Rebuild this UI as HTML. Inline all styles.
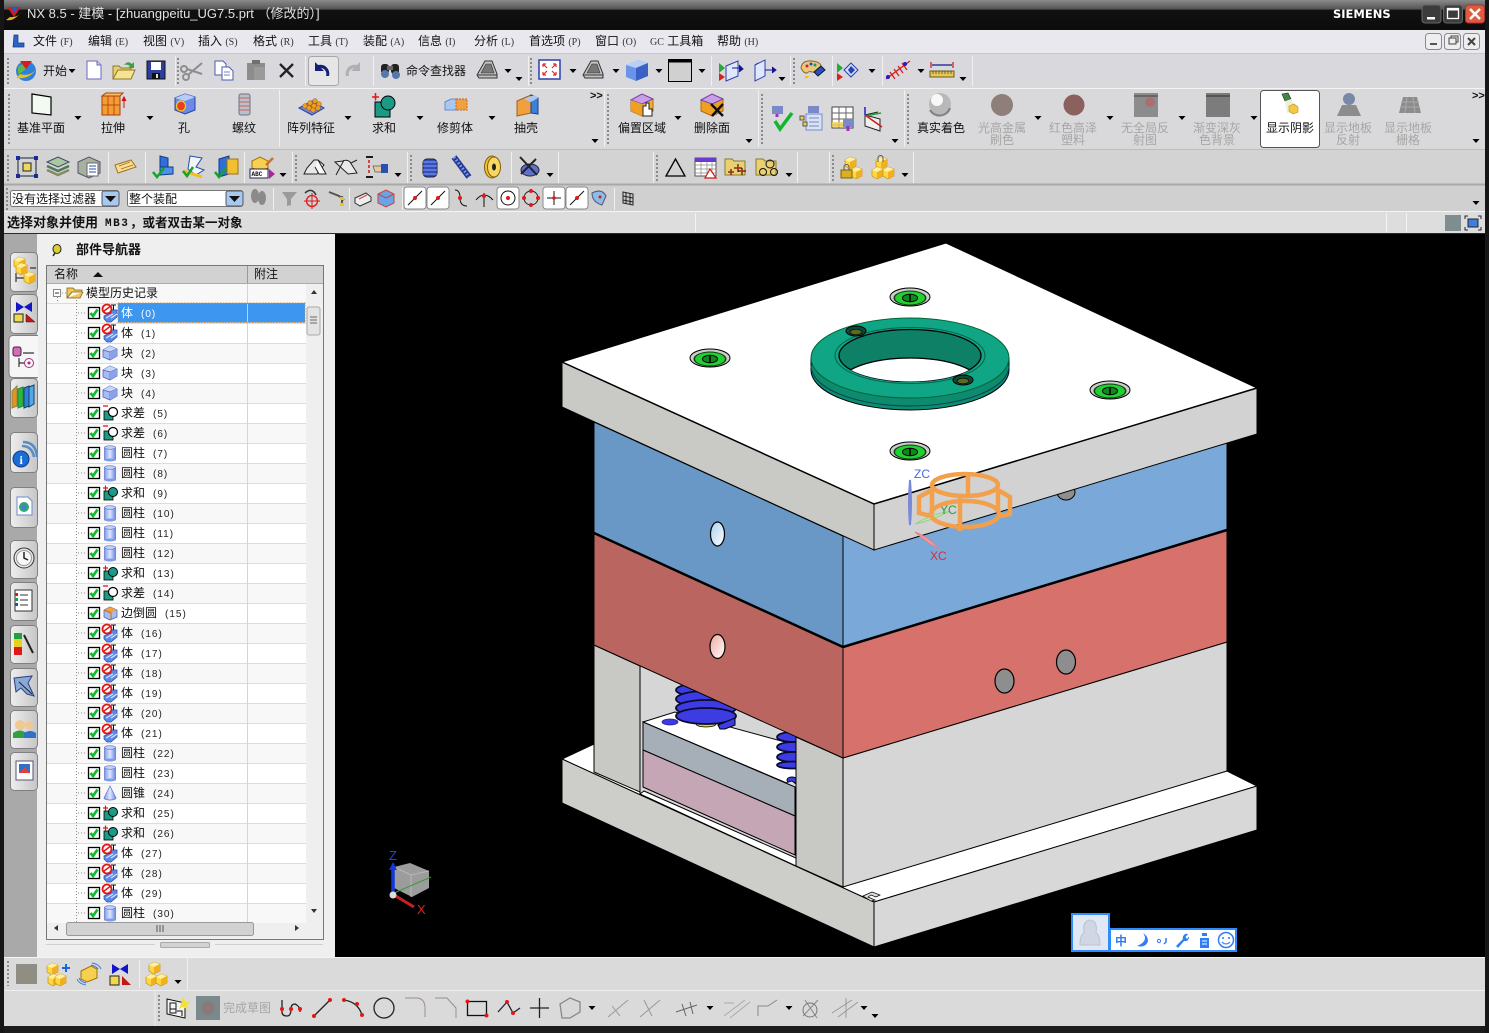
<!DOCTYPE html>
<html><head><meta charset="utf-8"><title>NX 8.5</title>
<style>
html,body{margin:0;padding:0;background:#000;width:1489px;height:1033px;overflow:hidden}
svg{display:block;position:absolute;left:0;top:0}
text{font-family:"Liberation Sans","WenQuanYi Zen Hei","Noto Sans CJK SC",sans-serif;font-size:12px;fill:#111}
.m{text-anchor:middle}
.g{fill:#a6a6a6}
.n{font-size:10px;letter-spacing:1px;fill:#222}
.k{font-size:10px;fill:#333;font-family:"Liberation Serif",serif}
.b{font-weight:bold}
.sep{stroke:#f0f0f0;stroke-width:1}
.grip{stroke:#8a8a8a;stroke-width:2;stroke-dasharray:2 2}
</style></head><body>
<svg width="1489" height="1033" viewBox="0 0 1489 1033" xmlns="http://www.w3.org/2000/svg">
<defs>
<linearGradient id="tb" x1="0" y1="0" x2="0" y2="1"><stop offset="0" stop-color="#8a8a8a"/><stop offset=".3" stop-color="#555"/><stop offset=".34" stop-color="#111"/><stop offset="1" stop-color="#0c0c0c"/></linearGradient>
<linearGradient id="cy" x1="0" y1="0" x2="1" y2="0"><stop offset="0" stop-color="#7f9be8"/><stop offset=".5" stop-color="#dfe7ff"/><stop offset="1" stop-color="#6a86dc"/></linearGradient>
<linearGradient id="tab" x1="0" y1="0" x2="1" y2="0"><stop offset="0" stop-color="#eeeeee"/><stop offset="1" stop-color="#c6c6c6"/></linearGradient>
<linearGradient id="hole" x1="0" y1="0" x2="1" y2="1"><stop offset="0" stop-color="#a8d0f0"/><stop offset="1" stop-color="#fff"/></linearGradient>
<linearGradient id="hole2" x1="0" y1="0" x2="1" y2="1"><stop offset="0" stop-color="#f0a8a0"/><stop offset="1" stop-color="#fff"/></linearGradient>
<clipPath id="innerClip"><ellipse cx="910" cy="355.5" rx="71" ry="26"/></clipPath>
<path id="dd" d="M-3.5 -2H3.5L0 2Z" fill="#000"/>
<g id="chk"><rect x="-5.5" y="-5.5" width="11" height="11" fill="#fff" stroke="#000" stroke-width="1.3"/><path d="M-3.5 0L-1 3L3.5 -3.5" fill="none" stroke="#10bc2e" stroke-width="2.700"/></g>
<g id="body"><path d="M-6 3L1 0V-3H7V4L1 9H-3L-6 6Z" fill="#5a8ae6" stroke="#2b4aa8" stroke-width=".7"/><path d="M-4 5L3 1M1 5L7 1" stroke="#d8e4fa" stroke-width="1.200"/><path d="M1 -8H6M3.500 -8V-3" stroke="#111" fill="none"/><circle cx="-3" cy="-4" r="4.500" fill="#fff" stroke="#e01818" stroke-width="1.800"/><path d="M-6.500 -1.500L0 -6.500" stroke="#e01818" stroke-width="1.500"/></g>
<g id="blk"><path d="M-7 -3L0 -7L7 -4V3L0 7L-7 4Z" fill="#a6bcf2" stroke="#4c62b8" stroke-width=".8"/><path d="M-7 -3L0 -7L7 -4L0 -1Z" fill="#c8d8fa"/><path d="M-7 -3L0 -1L7 -4M0 -1V7" fill="none" stroke="#4c62b8" stroke-width=".7"/><path d="M0 -1L7 -4V3L0 7Z" fill="#8aa2ea"/></g>
<g id="sub"><rect x="-6" y="-2" width="9" height="9" fill="#1d9a86" stroke="#000" stroke-width=".8"/><circle cx="3" cy="-1" r="4.500" fill="#fff" stroke="#000" stroke-width="1.200"/><path d="M-7 -7H-2" stroke="#e01818" stroke-width="1.300"/></g>
<g id="add"><rect x="-6" y="-2" width="9" height="9" fill="#1d9a86" stroke="#000" stroke-width=".8"/><circle cx="3" cy="-1" r="4.500" fill="#1d9a86" stroke="#000" stroke-width="1"/><path d="M-7 -5H-2M-4.500 -7.500V-2.500" stroke="#e01818" stroke-width="1.200"/></g>
<g id="cyl"><rect x="-5.500" y="-5" width="11" height="12" fill="url(#cy)" stroke="#5a72c8" stroke-width=".7"/><ellipse cx="0" cy="-5.500" rx="5.500" ry="1.800" fill="#c0d0fa" stroke="#5a72c8" stroke-width=".7"/><ellipse cx="0" cy="7" rx="5.500" ry="1.500" fill="#7f9be8"/></g>
<g id="cone"><path d="M0 -7L6 5A6 2 0 0 1 -6 5Z" fill="url(#cy)" stroke="#5a72c8" stroke-width=".7"/></g>
<g id="bld"><path d="M-6 -3L0 -6L7 -3V4L0 7L-6 4Z" fill="#a6bcf2" stroke="#4c62b8" stroke-width=".8"/><path d="M-6 -3L0 -6L7 -3L1 0Z" fill="#f2a040"/><path d="M-6 -3L1 0V7" fill="none" stroke="#c86a10"/></g>
<g id="screw"><ellipse rx="20" ry="9" fill="#cccccc" stroke="#000"/><ellipse cy="1" rx="16.500" ry="7.500" fill="#0c3d0c"/><ellipse cy="1" rx="15" ry="6.500" fill="#22d034"/><ellipse cy="1" rx="7.500" ry="3.800" fill="#0f8a1a" stroke="#000"/><path d="M0 -3V5" stroke="#000" stroke-width="1.500"/></g>
<g id="mini"><ellipse rx="10" ry="5" fill="#0b4a38" stroke="#000"/><ellipse cy="1" rx="6" ry="2.800" fill="#5c6a20" stroke="#000" stroke-width=".7"/></g>
<g id="ybox"><path d="M-6 -3L-1 -6L5 -4V3L-1 6L-6 3Z" fill="#fdd83f" stroke="#c89020" stroke-width=".7"/><path d="M-6 -3L-1 -6L5 -4L-1 -1Z" fill="#fff0a0"/><path d="M-1 -1L5 -4V3L-1 6Z" fill="#f0b020"/></g>
<g id="lasso"><path d="M-10 5L-2 -9H5L10 4V8L-8 8Z" fill="#c4c4c4" stroke="#333"/><path d="M-9 5L10 5" stroke="#333"/><path d="M-6 3L-1 -6H4L7 3Z" fill="#777" stroke="#333" stroke-width=".6"/></g>
<g id="vbtn"><rect x="-11" y="-11" width="22" height="22" rx="3" fill="#fff" stroke="#8a8a8a"/></g>
</defs>

<!-- frame -->
<rect width="1489" height="1033" fill="#101010"/>
<rect x="0" y="0" width="1489" height="30" fill="url(#tb)"/>
<!-- title -->
<g transform="translate(14,14)"><path d="M-7 -7L0 3L7 -7Z" fill="#d01c1c"/><path d="M-3 -7L1 -1L4 -7Z" fill="#1c5ccf"/><path d="M-8 6Q0 8 8 -3Q4 4 -4 3Z" fill="#e8b020"/></g>
<text x="27" y="18" style="font-size:13px;fill:#e2e2e2">NX 8.5 - 建模 - [zhuangpeitu_UG7.5.prt （修改的）]</text>
<text x="1333" y="18" style="font-size:11.500px;font-weight:bold;font-family:'DejaVu Sans',sans-serif;fill:#fff">SIEMENS</text>
<g transform="translate(1432,14)"><rect x="-10" y="-9" width="19" height="18" rx="3" fill="#3c3c3c" stroke="#666"/><rect x="-5" y="3" width="8" height="2.500" fill="#fff"/></g>
<g transform="translate(1453,14)"><rect x="-9.500" y="-9" width="19" height="18" rx="3" fill="#3c3c3c" stroke="#666"/><rect x="-5.500" y="-5.500" width="11" height="10" fill="none" stroke="#fff" stroke-width="1.300"/><path d="M-5.500 -4.500H5.500" stroke="#fff" stroke-width="2"/></g>
<g transform="translate(1475,14)"><rect x="-9.500" y="-9" width="19" height="18" rx="3" fill="#df5b3f" stroke="#a33"/><path d="M-5 -5L5 5M5 -5L-5 5" stroke="#fff" stroke-width="2.500"/></g>

<!-- toolbars bg -->
<rect x="4" y="30" width="1481" height="24" fill="#e8e8ee"/>
<rect x="4" y="54" width="1481" height="34" fill="#d9d9dd"/>
<rect x="4" y="88" width="1481" height="61" fill="#d9d9db"/>
<rect x="4" y="149" width="1481" height="36" fill="#d3d3d3"/>
<rect x="4" y="185" width="1481" height="27" fill="#d0d0d0"/>
<rect x="4" y="212" width="1481" height="21" fill="#dddddd"/>
<path d="M4 53.500H1485" stroke="#c6c6cc"/><path d="M4 88.500H1485" stroke="#f4f4f4"/><path d="M4 149.500H1485" stroke="#bdbdbd"/>
<path d="M4 184.500H1485" stroke="#a8a8a8" stroke-width="2"/><path d="M4 211.500H1485" stroke="#f4f4f4"/>
<path d="M4 233.500H1485" stroke="#2a2a2a"/>

<!-- menu -->
<g transform="translate(19,41)"><path d="M-5 -6H-1V2H5V6H-6Z" fill="#2d63c7" stroke="#123a88" stroke-width=".7"/></g>
<text x="33" y="45">文件 <tspan class="k">(F)</tspan></text>
<text x="88" y="45">编辑 <tspan class="k">(E)</tspan></text>
<text x="143" y="45">视图 <tspan class="k">(V)</tspan></text>
<text x="198" y="45">插入 <tspan class="k">(S)</tspan></text>
<text x="253" y="45">格式 <tspan class="k">(R)</tspan></text>
<text x="308" y="45">工具 <tspan class="k">(T)</tspan></text>
<text x="363" y="45">装配 <tspan class="k">(A)</tspan></text>
<text x="418" y="45">信息 <tspan class="k">(I)</tspan></text>
<text x="474" y="45">分析 <tspan class="k">(L)</tspan></text>
<text x="529" y="45">首选项 <tspan class="k">(P)</tspan></text>
<text x="595" y="45">窗口 <tspan class="k">(O)</tspan></text>
<text x="650" y="45"><tspan class="k">GC</tspan> 工具箱</text>
<text x="717" y="45">帮助 <tspan class="k">(H)</tspan></text>
<g fill="#eee" stroke="#8a8a94"><rect x="1425.500" y="33.500" width="16" height="16" rx="3"/><rect x="1444.500" y="33.500" width="16" height="16" rx="3"/><rect x="1463.500" y="33.500" width="16" height="16" rx="3"/></g>
<path d="M1430 44H1437" stroke="#555" stroke-width="2"/><path d="M1449 38h7v6h-7zM1451 38v-2h7v6h-2" fill="none" stroke="#444"/><path d="M1468 38L1475 45M1475 38L1468 45" stroke="#444" stroke-width="2"/>

<!-- row 1 -->
<g class="sep"><path d="M175.500 56V86M305.500 56V86M373.500 56V86M528.500 56V86M711.500 56V86M790.500 56V86M832.500 56V86M882.500 56V86M972.500 56V86"/></g>
<path class="grip" d="M8 58V84M178 58V84M531 58V84M794 58V84"/>
<g transform="translate(26,70)"><circle cy="1" r="10" fill="#2f7fdc"/><path d="M-8 -3Q-3 -8 2 -4Q-2 2 -8 4Z" fill="#5db84a"/><path d="M-6 -9H6L0 -1Z" fill="#d81c1c"/><path d="M-10 8Q4 10 11 -2Q5 7 -6 4Z" fill="#e8c020"/></g>
<text x="43" y="75">开始</text><use href="#dd" x="72" y="71"/>
<g transform="translate(94,70)"><path d="M-7 -9H3L7 -5V9H-7Z" fill="#fff" stroke="#6a6ac8"/><path d="M3 -9V-5H7" fill="#ccd" stroke="#6a6ac8"/></g>
<g transform="translate(124,70)"><path d="M-11 9V-4H-5L-3 -2H7V9Z" fill="#e9cf6a" stroke="#8a7a30"/><path d="M-11 9L-6 0H11L7 9Z" fill="#f8e490" stroke="#8a7a30"/><path d="M0 -5Q4 -10 8 -6L10 -8V-2H4L6 -4Q3 -6 0 -5Z" fill="#3ea040"/></g>
<g transform="translate(156,70)"><rect x="-9" y="-9" width="18" height="18" fill="#2d3f9a" stroke="#111"/><rect x="-5" y="-8" width="10" height="8" fill="#fff"/><rect x="-4" y="3" width="8" height="6" fill="#111"/><rect x="0" y="4" width="2" height="4" fill="#ddd"/></g>
<g transform="translate(193,70)" stroke="#8d8d8d" fill="none"><circle cx="-7" cy="7" r="3" stroke-width="2"/><circle cx="-9" cy="-1" r="3" stroke-width="2"/><path d="M-5 5L9 -7M-6 -1L9 4" stroke-width="2"/></g>
<g transform="translate(224,70)" fill="#fff" stroke="#4a5ab0"><path d="M-9 -9H-1L2 -6V5H-9Z"/><path d="M-2 -3H5L9 1V10H-2Z"/><path d="M0 2H6M0 5H6" stroke-width=".7"/></g>
<g transform="translate(256,70)"><rect x="-9" y="-7" width="18" height="17" fill="#8c8c8c"/><rect x="-4" y="-10" width="8" height="4" fill="#707070"/><rect x="-2" y="-3" width="11" height="13" fill="#9a9a9a"/></g>
<path d="M280 64L293 77M293 64L280 77" stroke="#222" stroke-width="2.300"/>
<rect x="308.500" y="56.500" width="30" height="29" rx="3" fill="#e6e6e6" stroke="#a8a8a8"/>
<path d="M329 76A9 9 0 0 0 318 65L315 62V71H324L321 68A6 6 0 0 1 326 76Z" fill="#15207a"/>
<path d="M346 76A9 9 0 0 1 357 65L360 62V71H351L354 68A6 6 0 0 0 349 76Z" fill="#b0b0b0"/>
<g transform="translate(390,70)"><rect x="-9" y="-6" width="8" height="10" rx="3" fill="#222"/><rect x="1" y="-6" width="8" height="10" rx="3" fill="#222"/><circle cx="-5" cy="4" r="4" fill="#5577aa"/><circle cx="6" cy="5" r="4" fill="#5577aa"/><rect x="-3" y="-4" width="6" height="4" fill="#666"/></g>
<text x="406" y="75">命令查找器</text>
<use href="#lasso" x="487" y="70"/><use href="#dd" x="508" y="71"/><use href="#dd" x="519" y="79"/>
<g transform="translate(550,70)"><rect x="-11" y="-10" width="21" height="19" fill="#fff" stroke="#2a3fb0" stroke-width="1.500"/><path d="M-7 -6L-3 -2M-7 -6V-3M-7 -6H-4M6 -6L2 -2M6 -6V-3M6 -6H3M-7 5L-3 1M-7 5V2M-7 5H-4M6 5L2 1M6 5V2M6 5H3" stroke="#dd2a2a" stroke-width="1.200" fill="none"/></g>
<use href="#dd" x="573" y="71"/><use href="#lasso" x="593" y="70"/><use href="#dd" x="616" y="71"/>
<g transform="translate(637,70)"><path d="M-11 -5L1 -10L11 -7V6L-1 11L-11 7Z" fill="#6a94ea"/><path d="M-11 -5L-1 -2L11 -7L1 -10Z" fill="#b8d0f8"/><path d="M-1 -2V11L11 6V-7Z" fill="#3a62c4"/></g><use href="#dd" x="659" y="71"/>
<rect x="668.500" y="59.500" width="23" height="22" fill="#d0d0d0" stroke="#000"/><path d="M669 61H691" stroke="#000" stroke-width="3"/><use href="#dd" x="702" y="71"/>
<g transform="translate(730,70)"><path d="M-4 -4L8 -9V6L-4 11Z" fill="#dfe8fb" stroke="#2a3fb0"/><path d="M2 -2H12M9 -5L13 -1L9 2" stroke="#14149a" fill="#14149a"/><path d="M-11 -7L-5 -2L-11 3Z" fill="#28a83a"/><path d="M-11 3L-5 7L-11 11Z" fill="#d82020"/></g>
<g transform="translate(762,70)"><path d="M-7 -5L3 -10V6L-7 11Z" fill="#dfe8fb" stroke="#2a3fb0"/><path d="M-7 -5L-4 -7" stroke="#2a3fb0"/><path d="M3 0H14M10 -3L14 0L10 3" stroke="#14149a" fill="#14149a"/></g><use href="#dd" x="782" y="79"/>
<g transform="translate(812,70)"><path d="M-11 -2Q-10 -10 0 -9Q10 -8 9 -2Q6 3 0 2Q-3 1 -5 3Q-8 4 -11 -2Z" fill="#e8c880" stroke="#8a6a20"/><circle cx="-5" cy="-4" r="1.500" fill="#d82020"/><circle cx="-1" cy="-6" r="1.500" fill="#2050d0"/><circle cx="3" cy="-5" r="1.500" fill="#20a040"/><path d="M2 2L9 -4L13 0L6 6Z" fill="#2a50c0" stroke="#112"/><path d="M-2 6Q-8 11 -7 6Z" fill="#f0c020"/></g>
<g transform="translate(848,70)"><path d="M-11 -7L-5 -2L-11 3Z" fill="#28a83a"/><path d="M-11 3L-5 7L-11 11Z" fill="#d82020"/><path d="M3 -7L10 0L3 7L-4 0Z" fill="#cfe0fb" stroke="#2a3fb0"/><path d="M3 -4L7 0L3 4L0 0Z" fill="#2a3fb0"/></g><use href="#dd" x="872" y="71"/>
<g transform="translate(898,70)"><path d="M-12 9L12 -9" stroke="#d82020" stroke-width="1.300"/><path d="M-8 2L-3 9M-4 -1L1 6M0 -4L5 3M4 -7L9 0" stroke="#d82020" stroke-width="1.300"/><circle cx="-10" cy="7" r="2" fill="#1c1cd0"/><circle cx="7" cy="-6" r="2" fill="#1c1cd0"/></g><use href="#dd" x="921" y="71"/>
<g transform="translate(942,70)"><path d="M-11 -8V-2M11 -8V-2" stroke="#d82020" stroke-width="1.300"/><path d="M-10 -5H10" stroke="#14149a" stroke-width="1.300"/><rect x="-12" y="1" width="24" height="6" fill="#e8c850" stroke="#6a5a20"/><path d="M-9 1V4M-6 1V4M-3 1V4M0 1V4M3 1V4M6 1V4M9 1V4" stroke="#333" stroke-width=".7"/></g><use href="#dd" x="963" y="79"/>

<!-- row 2 -->
<g class="sep"><path d="M279.500 90V147M604.500 90V147M758.500 90V147M904.500 90V147"/></g>
<path class="grip" d="M9 94V144M608 94V144M762 94V144M908 94V144"/>
<g transform="translate(41,104)"><path d="M-9 -10L10 -7V11L-9 9Z" fill="#f2faf2" stroke="#000" stroke-width="1.200"/></g>
<text x="41" y="132" class="m">基准平面</text><use href="#dd" x="78" y="118"/>
<g transform="translate(113,104)"><path d="M-11 -8H7V11H-11Z" fill="#f0a030" stroke="#a84010"/><path d="M-11 -8L-7 -11H10L7 -8Z" fill="#f8c060" stroke="#a84010"/><path d="M-5 -8V11M1 -8V11M-11 1H7" stroke="#c84018"/><path d="M11 4V-6M9 -3L11 -7L13 -3" stroke="#d01010" fill="#d01010"/></g>
<text x="113" y="132" class="m">拉伸</text><use href="#dd" x="150" y="118"/>
<g transform="translate(185,104)"><path d="M-10 -6L0 -10L10 -7V6L0 10L-10 6Z" fill="#6e8ae8" stroke="#2a3fa0"/><path d="M-10 -6L0 -3L10 -7L0 -10Z" fill="#b8ccf8"/><ellipse cx="-4" cy="2" rx="4.500" ry="5" fill="#e84020" stroke="#f0d020" stroke-width="1.200"/></g>
<text x="184" y="132" class="m">孔</text>
<g transform="translate(244,104)"><rect x="-5" y="-10" width="11" height="21" rx="2" fill="#b8c0cc" stroke="#6a7280"/><path d="M-5 -6H6M-5 -2H6M-5 2H6M-5 6H6" stroke="#d06060"/></g>
<text x="244" y="132" class="m">螺纹</text>
<g transform="translate(311,106)"><path d="M-12 2L1 -5L13 2L1 9Z" fill="#6a8ae0" stroke="#2a3fa0"/><g fill="#f0a020" stroke="#b06010" stroke-width=".6"><circle cx="-6" cy="0" r="2.300"/><circle cx="-1" cy="-3" r="2.300"/><circle cx="4" cy="-5" r="2.300"/><circle cx="-2" cy="2" r="2.300"/><circle cx="3" cy="0" r="2.300"/><circle cx="8" cy="-2" r="2.300"/><circle cx="2" cy="4" r="2.300"/><circle cx="7" cy="2" r="2.300"/></g></g>
<text x="311" y="132" class="m">阵列特征</text><use href="#dd" x="348" y="118"/>
<g transform="translate(384,106)"><rect x="-9" y="-4" width="15" height="15" fill="#1d9a86" stroke="#000"/><circle cx="4" cy="-3" r="7" fill="#1d9a86" stroke="#000"/><path d="M-12 -9H-5M-8.500 -13V-5.500" stroke="#e01818" stroke-width="1.500"/></g>
<text x="384" y="132" class="m">求和</text><use href="#dd" x="420" y="118"/>
<g transform="translate(456,105)"><path d="M-11 -3L-5 -6H2V5H-11Z" fill="#a9c8f0" stroke="#6a8ac8"/><path d="M0 -6H11V5H0Z" fill="#f0a040" stroke="#c06820" stroke-dasharray="2 1"/></g>
<text x="455" y="132" class="m">修剪体</text><use href="#dd" x="492" y="118"/>
<g transform="translate(527,105)"><path d="M-10 -4L4 -10V8L-10 11Z" fill="#f0a040" stroke="#a06020"/><path d="M4 -10L11 -7V9L4 8Z" fill="#3f7fd8" stroke="#1a3f88"/><path d="M-3 -6Q8 -12 11 -7L4 -3Z" fill="#a8c8f0"/></g>
<text x="526" y="132" class="m">抽壳</text>
<text x="590" y="99" class="b" style="font-size:11px">&gt;&gt;</text><use href="#dd" x="595" y="141"/>
<g transform="translate(642,105)"><path d="M-11 -5L0 -11L11 -6V6L0 11L-11 6Z" fill="#f0b030" stroke="#b06a10"/><path d="M-11 -5L0 -11L11 -6L0 -1Z" fill="#c8a0e8" stroke="#7a40b0"/><path d="M0 -1V11L-11 6V-5Z" fill="#f0a020"/><path d="M1 1H4V-2H7V4H10V11H1Z" fill="#fff" stroke="#222"/></g>
<text x="642" y="132" class="m">偏置区域</text><use href="#dd" x="678" y="118"/>
<g transform="translate(712,105)"><path d="M-11 -5L0 -11L11 -6V6L0 11L-11 6Z" fill="#f0a020" stroke="#b06a10"/><path d="M-11 -5L0 -11L11 -6L0 -1Z" fill="#c8a0e8" stroke="#7a40b0"/><path d="M-1 -1L11 11M11 -1L0 11" stroke="#111" stroke-width="2.500"/></g>
<text x="712" y="132" class="m">删除面</text><use href="#dd" x="749" y="141"/>
<g transform="translate(781,119)"><path d="M-9 -13H2V-5H-9Z" fill="#7a8ac8"/><path d="M-4 -5V-2" stroke="#a030c0" stroke-width="3"/><path d="M-6 2L-1 10L11 -6" fill="none" stroke="#12b52c" stroke-width="3.500"/></g>
<g transform="translate(812,119)"><rect x="-6" y="-5" width="16" height="16" fill="#d6e2f8" stroke="#7a8ac8"/><path d="M-3 -1H7M-3 3H7M-3 7H7" stroke="#88a"/><rect x="-4" y="-13" width="11" height="7" fill="#7a8ac8"/><rect x="-12" y="-3" width="4" height="4" fill="#f0d050" stroke="#555"/><rect x="-9" y="3" width="4" height="4" fill="#f0d050" stroke="#555"/></g>
<g transform="translate(843,118)"><rect x="-11" y="-11" width="21" height="21" fill="#fff" stroke="#444"/><path d="M-11 -5H10M-11 1H10M-11 7H10M-4 -11V10M3 -11V10" stroke="#666"/><rect x="-11" y="4" width="21" height="5" fill="#f0d050" opacity=".8"/><rect x="0" y="1" width="10" height="8" fill="#7a8ac8"/><path d="M5 8V13" stroke="#a030c0" stroke-width="3"/></g>
<g transform="translate(874,119)"><path d="M-9 -4V7L6 12V0Z" fill="#f0f0f0" stroke="#222"/><path d="M-9 -4L4 -7" stroke="#222"/><path d="M-9 -12V-4" stroke="#1c1cd0" stroke-width="1.500"/><path d="M-9 -3L7 -6" stroke="#20a040" stroke-width="1.500"/><path d="M-9 -4L8 8" stroke="#d01818" stroke-width="1.500"/></g>
<use href="#dd" x="895" y="141"/>
<circle cx="940" cy="104" r="11" fill="#b8b8b8"/><circle cx="937" cy="100" r="6" fill="#f8f8f8"/><path d="M930 110A11 11 0 0 0 950 108" stroke="#808080" stroke-width="2" fill="none"/>
<text x="941" y="132" class="m">真实着色</text>
<circle cx="1002" cy="105" r="11" fill="#8e7f7a"/>
<text x="1002" y="132" class="m g">光高金属</text><text x="1002" y="144" class="m g">刷色</text><use href="#dd" x="1038" y="118"/>
<circle cx="1074" cy="105" r="10.500" fill="#8c605c"/>
<text x="1073" y="132" class="m g">红色高泽</text><text x="1073" y="144" class="m g">塑料</text><use href="#dd" x="1110" y="118"/>
<rect x="1134" y="93" width="24" height="24" fill="#8c8c8c"/><circle cx="1150" cy="102" r="5" fill="#a87070"/><path d="M1134 96H1158" stroke="#666" stroke-width="2"/>
<text x="1145" y="132" class="m g">无全局反</text><text x="1145" y="144" class="m g">射图</text><use href="#dd" x="1182" y="118"/>
<rect x="1206" y="93" width="24" height="24" fill="#7c7c7c"/><path d="M1206 96H1230" stroke="#555" stroke-width="2"/>
<text x="1217" y="132" class="m g">渐变深灰</text><text x="1217" y="144" class="m g">色背景</text><use href="#dd" x="1254" y="118"/>
<rect x="1260.500" y="90.500" width="59" height="57" rx="3" fill="#fff" stroke="#555"/>
<g transform="translate(1290,106)"><path d="M-8 -12L-2 -13L1 -7L-5 -5Z" fill="#3f8a3f" stroke="#222" stroke-width=".6"/><path d="M-5 -5L1 -7L9 7H-3Z" fill="#e8f0d0" opacity=".9"/><path d="M-1 0L4 -2L8 1V6L3 8L-1 5Z" fill="#f4c840" stroke="#c09020" stroke-width=".6"/></g>
<text x="1290" y="132" class="m">显示阴影</text>
<g transform="translate(1349,105)"><circle cy="-6" r="6" fill="#7a88a8"/><path d="M-7 0H7L12 11H-12Z" fill="#8c8c8c"/></g>
<text x="1348" y="132" class="m g">显示地板</text><text x="1348" y="144" class="m g">反射</text>
<g transform="translate(1410,105)"><path d="M-7 -8H7L11 8H-11Z" fill="#8c8c8c"/><path d="M-9 -3H9M-10 2H10M-3 -8L-5 8M3 -8L5 8" stroke="#aaa"/></g>
<text x="1408" y="132" class="m g">显示地板</text><text x="1408" y="144" class="m g">栅格</text>
<text x="1472" y="99" class="b" style="font-size:11px">&gt;&gt;</text><use href="#dd" x="1476" y="141"/>

<!-- row 3 -->
<g class="sep"><path d="M108.500 152V183M145.500 152V183M244.500 152V183M292.500 152V183M407.500 152V183M511.500 152V183M558.500 152V183M653.500 152V183M797.500 152V183M829.500 152V183M913.500 152V183"/></g>
<path class="grip" d="M8 155V182M296 155V182M411 155V182M657 155V182M833 155V182"/>
<g transform="translate(27,167)"><rect x="-9" y="-9" width="18" height="18" fill="none" stroke="#123" stroke-width="1"/><rect x="-4" y="-4" width="8" height="8" fill="#f0d850" stroke="#223"/><g fill="#1a2a9a"><rect x="-11" y="-11" width="4" height="4"/><rect x="7" y="-11" width="4" height="4"/><rect x="-11" y="7" width="4" height="4"/><rect x="7" y="7" width="4" height="4"/></g></g>
<g transform="translate(58,167)"><path d="M-11 -5L0 -10L11 -5L0 0Z" fill="#a8c8a0" stroke="#446"/><path d="M-11 -1L0 4L11 -1" fill="none" stroke="#4a7a5a" stroke-width="2.500"/><path d="M-11 3L0 8L11 3" fill="none" stroke="#888860" stroke-width="2.500"/></g>
<g transform="translate(89,167)"><path d="M-11 -5L0 -10L11 -5V6L0 11L-11 6Z" fill="#a8b0a0" stroke="#556"/><rect x="-2" y="-4" width="11" height="13" fill="#fff" stroke="#667"/><path d="M0 -1H7M0 2H7M0 5H7" stroke="#2a50b0"/></g>
<g transform="translate(125,167)"><path d="M-10 -2L6 -7L11 0L-7 6Z" fill="#f8e090" stroke="#a07020"/><path d="M-6 -1L5 -5M-4 2L8 -2" stroke="#a06020" stroke-width=".7"/></g>
<g transform="translate(163,167)"><path d="M-3 -11L5 -9V6L-3 8Z" fill="#2f6fd8" stroke="#123a88"/><path d="M-3 0H10V7L-3 8Z" fill="#4f90e8" stroke="#123a88"/><path d="M-10 5L-6 10L1 1" fill="none" stroke="#12a52c" stroke-width="2.500"/></g>
<g transform="translate(194,167)"><path d="M-4 -11L8 -9L2 0L10 3L2 8L-6 2Z" fill="#f4f4f8" stroke="#2050b0"/><path d="M-10 4L8 10" stroke="#f0c020" stroke-width="3"/><path d="M-11 4L-7 9L-1 0" fill="none" stroke="#12a52c" stroke-width="2.500"/></g>
<g transform="translate(226,167)"><path d="M-7 -8L3 -11V7L-7 10Z" fill="#2f6fd8" stroke="#123a88"/><rect x="1" y="-8" width="11" height="15" fill="#f0c030" stroke="#a07010"/><path d="M-11 5L-7 10L0 1" fill="none" stroke="#12a52c" stroke-width="2.500"/></g>
<g transform="translate(262,167)"><path d="M-10 -6L-2 -10L6 -6V1L-2 4L-10 1Z" fill="#f8d050" stroke="#a07010"/><rect x="-12" y="2" width="18" height="9" fill="#fff" stroke="#225"/><text x="-10.500" y="9" style="font-size:6px;font-family:'Liberation Mono',monospace" class="b">ABC</text><path d="M7 2L13 7L7 12Z" fill="#b020a0"/><path d="M4 -2L11 -9" stroke="#d07020" stroke-width="2.500"/></g><use href="#dd" x="283" y="175"/>
<g transform="translate(315,167)"><path d="M-11 7H2L9 -2L3 -7H-1L-8 1Z" fill="#e8e8e8" stroke="#222"/><path d="M3 -7L11 7H4L0 0" fill="#f8f8f8" stroke="#222"/></g>
<g transform="translate(346,167)"><path d="M-11 -5L2 7L11 6L4 -5Q1 -8 -3 -6Z" fill="#e8e8e8" stroke="#222"/><path d="M-2 -7L-10 8" stroke="#222" fill="none"/><path d="M5 -4L11 -7" stroke="#222"/></g>
<g transform="translate(376,167)"><path d="M-10 -10H-3M-10 10H-3" stroke="#000" stroke-width="1.800"/><path d="M-7 -7V7" stroke="#d01818" stroke-width="1.500" stroke-dasharray="3 2"/><path d="M-3 -1H10V5H-1Z" fill="#e8c8a0" stroke="#555" stroke-width=".7"/><rect x="5" y="-3" width="7" height="9" fill="#2a50b0"/></g><use href="#dd" x="398" y="175"/>
<g transform="translate(430,167)"><rect x="-7" y="-8" width="14" height="18" rx="4" fill="#3050c0" stroke="#223"/><path d="M-7 -5H7M-7 -1H7M-7 3H7M-7 7H7" stroke="#8ca0e8"/></g>
<g transform="translate(461,167)"><path d="M-7 -10L8 10" stroke="#233a9a" stroke-width="6"/><path d="M-7 -10L8 10" stroke="#8ca0e8" stroke-width="3" stroke-dasharray="1.500 2"/></g>
<g transform="translate(492,167)"><ellipse rx="7.500" ry="11" fill="#f0c030" stroke="#805f10"/><ellipse cx="2" rx="6.500" ry="10" fill="#f8d860" stroke="#805f10"/><ellipse cx="2" rx="2" ry="3.500" fill="#222"/></g>
<g transform="translate(528,167)"><ellipse cx="2" cy="3" rx="9" ry="6" fill="#6070c8" stroke="#223"/><path d="M-8 -10L9 8M8 -8L-7 7" stroke="#222" stroke-width="2"/></g><use href="#dd" x="550" y="175"/>
<path d="M666 176L675.500 159L685 176Z" fill="none" stroke="#000" stroke-width="1.300"/>
<g transform="translate(705,167)"><rect x="-10" y="-9" width="21" height="18" fill="#fff" stroke="#555"/><rect x="-10" y="-9" width="21" height="4" fill="#6a3ad0"/><path d="M-10 -2H11M-10 2H11M-10 6H11M-4 -5V9M2 -5V9M7 -5V9" stroke="#888" stroke-width=".7"/><path d="M0 11L5 2L11 11Z" fill="#fff" stroke="#d01818" stroke-width="1.200"/></g>
<g transform="translate(736,167)"><path d="M-11 8V-8H-4L-2 -6H9V8Z" fill="#e9d070" stroke="#8a7a30"/><path d="M-2 1H6M2 -3V5M-8 5H-2M-5 2V8M2 4H10M6 1V8" stroke="#000"/><circle cx="2" cy="1" r="1.500" fill="#e01818"/><circle cx="-5" cy="5" r="1.500" fill="#e01818"/><circle cx="6" cy="4" r="1.500" fill="#e01818"/></g>
<g transform="translate(767,167)"><path d="M-11 8V-8H-4L-2 -6H9V8Z" fill="#e9d070" stroke="#8a7a30"/><circle cx="3" cy="-3" r="4" fill="none" stroke="#111"/><circle cx="-4" cy="5" r="3.500" fill="none" stroke="#111"/><circle cx="7" cy="5" r="3.500" fill="none" stroke="#111"/></g><use href="#dd" x="789" y="175"/>
<g transform="translate(852,167)"><use href="#ybox" x="-1" y="-4"/><use href="#ybox" x="5" y="6"/><path d="M-11 3H0V11H-11Z" fill="#d8b020" stroke="#806010"/><path d="M-8 3V0A2.500 2.500 0 0 1 -3 0V3" fill="none" stroke="#555"/></g>
<g transform="translate(883,167)"><use href="#ybox" x="-1" y="-4"/><use href="#ybox" x="-5" y="6"/><use href="#ybox" x="6" y="6"/><path d="M-5 -5V-9A2.500 2.500 0 0 1 0 -9V-5" fill="none" stroke="#555"/></g><use href="#dd" x="905" y="175"/>

<!-- row 4 -->
<rect x="10.500" y="190.500" width="108" height="16" rx="2" fill="#fff" stroke="#777"/>
<text x="12" y="203">没有选择过滤器</text>
<rect x="102" y="191" width="17" height="15" rx="2" fill="#a8c8ec" stroke="#556"/><path d="M105 196H116L110.500 202Z" fill="#111"/>
<rect x="127.500" y="190.500" width="115" height="16" rx="2" fill="#fff" stroke="#777"/>
<text x="129" y="203">整个装配</text>
<rect x="226" y="191" width="17" height="15" rx="2" fill="#a8c8ec" stroke="#556"/><path d="M229 196H240L234.500 202Z" fill="#111"/>
<g class="sep"><path d="M273.500 188V210M349.500 188V210M402.500 188V210M614.500 188V210"/></g>
<path class="grip" d="M7 188V210"/>
<g transform="translate(258,198)" fill="#8a8a8a"><ellipse cx="-3" cy="-2" rx="4" ry="7"/><ellipse cx="4" cy="0" rx="4" ry="7"/></g>
<g transform="translate(289,198)"><path d="M-7 -6H8L2 1V7L-2 8V1Z" fill="#9a9a9a"/></g>
<g transform="translate(312,198)"><circle r="5.500" cy="3" fill="none" stroke="#e01818" stroke-width="1.300"/><path d="M-8 3H8M0 -5V11" stroke="#e01818"/><path d="M-7 -5Q0 -11 4 -3" fill="none" stroke="#333" stroke-width="1.500"/></g>
<g transform="translate(337,198)"><path d="M-8 -6L2 -2L7 2M5 -2V8" stroke="#555" stroke-width="2" fill="none"/><rect x="3" y="-1" width="4" height="3" fill="#f0c020"/><rect x="3" y="5" width="4" height="3" fill="#f0c020"/></g>
<g transform="translate(363,198)"><path d="M-8 0L3 -5L8 -1V3L-3 8L-8 5Z" fill="#eee" stroke="#333"/><path d="M-4 1L4 -3" stroke="#d04040"/></g>
<g transform="translate(386,198)"><path d="M-8 -4L0 -8L8 -4V5L0 9L-8 5Z" fill="#6aa4e8" stroke="#c84040"/><path d="M-8 -4L0 0L8 -4" fill="none" stroke="#c84040"/></g>
<use href="#vbtn" x="415" y="198"/><use href="#vbtn" x="438" y="198"/><use href="#vbtn" x="508" y="198"/><use href="#vbtn" x="554" y="198"/><use href="#vbtn" x="577" y="198"/>
<path d="M408 205L422 191M431 205L445 191" stroke="#111"/><circle cx="415" cy="198" r="2" fill="#e01818"/><circle cx="438" cy="198" r="2" fill="#e01818"/>
<path d="M455 190Q460 190 460 198Q460 206 467 206" fill="none" stroke="#111"/><circle cx="460" cy="198" r="2" fill="#e01818"/>
<path d="M476 200Q484 190 493 200M484 193V207" fill="none" stroke="#111"/><circle cx="484" cy="196" r="2" fill="#e01818"/>
<circle cx="508" cy="198" r="7" fill="none" stroke="#111"/><circle cx="508" cy="198" r="2" fill="#e01818"/>
<circle cx="531" cy="198" r="7" fill="none" stroke="#222"/><g fill="#e01818"><circle cx="531" cy="191" r="2"/><circle cx="531" cy="205" r="2"/><circle cx="524" cy="198" r="2"/><circle cx="538" cy="198" r="2"/></g>
<path d="M554 191V205M547 198H561" stroke="#111"/><circle cx="554" cy="198" r="1.800" fill="#e01818"/>
<path d="M570 205L584 191" stroke="#111"/><circle cx="577" cy="198" r="2" fill="#e01818"/>
<path d="M592 193Q602 188 606 196L602 205Q592 202 592 193Z" fill="#8cbce8" stroke="#557"/><circle cx="600" cy="197" r="1.500" fill="#e01818"/>
<g transform="translate(628,198)"><path d="M-5 -6L5 -4V7L-5 5Z" fill="#ccc" stroke="#222"/><path d="M-2 -5.500V6M2 -4.500V6.500M-5 -2L5 0M-5 2L5 4" stroke="#222"/></g>
<use href="#dd" x="1476" y="203"/>

<!-- status -->
<text x="7" y="227" class="b" style="font-size:13px">选择对象并使用</text>
<text x="105" y="226" class="b" style="font-family:'Liberation Mono',monospace;font-size:11px;letter-spacing:1.500px">MB3</text>
<text x="130" y="227" class="b" style="font-size:12.500px">，或者双击某一对象</text>
<path d="M695.500 213V232M1386.500 213V232M1406.500 213V232" stroke="#f4f4f4"/>
<rect x="1445" y="215" width="16" height="16" fill="#7e8e8e"/><g transform="translate(1473,223)"><rect x="-5" y="-4" width="10" height="8" fill="#3f7fd8" stroke="#223"/><path d="M-8 -4V-7H-5M5 -7H8V-4M8 4V7H5M-5 7H-8V4" fill="none" stroke="#223"/></g>

<!-- left strip & panel -->
<rect x="4" y="234" width="33" height="723" fill="#a9a9a9"/>
<rect x="37" y="234" width="298" height="723" fill="#efefef"/>
<g fill="url(#tab)" stroke="#808080">
<rect x="10.500" y="252.500" width="27" height="39" rx="4"/><rect x="10.500" y="294.500" width="27" height="39" rx="4"/><rect x="10.500" y="378.500" width="27" height="39" rx="4"/>
<rect x="10.500" y="432.500" width="27" height="40" rx="4"/><rect x="10.500" y="487.500" width="27" height="40" rx="4"/><rect x="10.500" y="540.500" width="27" height="38" rx="4"/><rect x="10.500" y="582.500" width="27" height="38" rx="4"/><rect x="10.500" y="625.500" width="27" height="38" rx="4"/><rect x="10.500" y="668.500" width="27" height="38" rx="4"/><rect x="10.500" y="710.500" width="27" height="38" rx="4"/><rect x="10.500" y="752.500" width="27" height="38" rx="4"/>
</g>
<path d="M38 335.500H13Q9 335.500 9 340V373Q9 377.500 13 377.500H38" fill="#f6f6f6" stroke="#808080"/>
<g transform="translate(24,270)"><use href="#ybox" x="-4" y="-7"/><use href="#ybox" x="-2" y="-1"/><path d="M-8 3V12M-8 8H0M6 -2H12" stroke="#333" stroke-width="1.200" fill="none"/><use href="#ybox" x="6" y="8"/></g>
<g transform="translate(24,312)"><path d="M-8 -10L0 -5L-8 0ZM8 -10L0 -5L8 0Z" fill="#1414c8"/><rect x="-10" y="2" width="9" height="8" fill="#f0d850" stroke="#222"/><path d="M2 10V2L11 10Z" fill="#c81414" stroke="#222" stroke-width=".5"/></g>
<g transform="translate(24,356)"><rect x="-11" y="-9" width="8" height="9" rx="2" fill="#d070b0" stroke="#4a1a50"/><path d="M-5 2V11M-5 7H1M-1 -3H10" stroke="#333" stroke-width="1.200"/><circle cx="5" cy="7" r="4.500" fill="none" stroke="#a03080"/><circle cx="5" cy="7" r="1.500" fill="#a03080"/></g>
<g transform="translate(24,397)"><path d="M-12 -6L-7 -11V9L-12 11Z" fill="#e89020" stroke="#884"/><path d="M-6 -8L-1 -10V9L-6 11Z" fill="#30b830" stroke="#284"/><path d="M0 -9L5 -11V9L0 11Z" fill="#3080d8" stroke="#146"/><path d="M5 -10L10 -12V7L5 10Z" fill="#50a8e8" stroke="#146"/></g>
<g transform="translate(24,454)"><circle cx="-3" cy="5" r="8" fill="#1c6cd8" stroke="#0c3c88"/><text x="-4.500" y="10" class="b" style="font-size:12px;fill:#fff;font-family:'Liberation Serif',serif">i</text><path d="M-2 -8Q8 -8 10 3M-1 -12Q12 -12 13 3" fill="none" stroke="#5a8cc8" stroke-width="2.500"/></g>
<g transform="translate(24,506)"><path d="M-7 -9H4L8 -5V9H-7Z" fill="#fff" stroke="#6a8ac8"/><circle cx="0" cy="1" r="5" fill="#30a870"/><circle cx="0" cy="1" r="2.500" fill="#4a7ad8"/></g>
<g transform="translate(24,558)"><circle r="10" fill="#e6e6e6" stroke="#333"/><circle r="7.500" fill="#f8f8f8" stroke="#999"/><path d="M0 -6V0L4 2" fill="none" stroke="#222" stroke-width="1.500"/></g>
<g transform="translate(24,600)"><rect x="-9" y="-10" width="17" height="21" fill="#fff" stroke="#333"/><path d="M-4 -5H4M-4 0H4M-4 5H4" stroke="#333"/><rect x="-9" y="-7" width="3" height="3" fill="#e01818"/><rect x="-9" y="-2" width="3" height="3" fill="#20a040"/><rect x="-9" y="3" width="3" height="3" fill="#2050c0"/></g>
<g transform="translate(24,643)"><rect x="-10" y="-10" width="8" height="22" fill="#e8d020"/><rect x="-10" y="-10" width="8" height="6" fill="#20a040"/><rect x="-10" y="4" width="8" height="8" fill="#e01818"/><path d="M0 -8L9 10" stroke="#222" stroke-width="2"/></g>
<g transform="translate(24,686)"><path d="M-10 -8L8 -10L4 -3L10 10L3 8L-3 2L-8 6Z" fill="#8aa8d8" stroke="#2a4080"/><path d="M-5 -4L8 8" stroke="#222"/></g>
<g transform="translate(24,728)"><circle cx="-4" cy="-3" r="5" fill="#f0c890"/><path d="M-11 10V5Q-4 0 2 5V10Z" fill="#30a040"/><circle cx="5" cy="-3" r="4" fill="#f0c890"/><path d="M0 10V5Q6 1 12 5V10Z" fill="#3070c8"/></g>
<g transform="translate(24,770)"><rect x="-8" y="-9" width="17" height="19" fill="#fff" stroke="#557"/><rect x="-5" y="-6" width="11" height="9" fill="#3070c8"/><path d="M-5 3L1 -3L6 3Z" fill="#e04040"/></g>

<!-- navigator header -->
<g transform="translate(57,250)"><ellipse cx="0" cy="-1" rx="4" ry="4.500" fill="#d8d030" stroke="#222"/><path d="M-2 3L-4 6" stroke="#222" stroke-width="1.500"/></g>
<text x="76" y="254" class="b" style="font-size:13px">部件导航器</text>

<!-- tree -->
<rect x="46.500" y="265.500" width="277" height="674" fill="#f2f2f2" stroke="#777"/>
<rect x="47" y="266" width="276" height="17" fill="#d2d2d2"/><path d="M47 283.500H323" stroke="#aaa"/>
<text x="54" y="278">名称</text><path d="M93 277L98 272L103 277Z" fill="#111"/><text x="254" y="278">附注</text><path d="M247.500 266V283" stroke="#999"/>
<rect x="47" y="284" width="259" height="639" fill="#f8f8f8"/>
<g fill="#fff"><rect x="47" y="323" width="259" height="20"/><rect x="47" y="363" width="259" height="20"/><rect x="47" y="403" width="259" height="20"/><rect x="47" y="443" width="259" height="20"/><rect x="47" y="483" width="259" height="20"/><rect x="47" y="523" width="259" height="20"/><rect x="47" y="563" width="259" height="20"/><rect x="47" y="603" width="259" height="20"/><rect x="47" y="643" width="259" height="20"/><rect x="47" y="683" width="259" height="20"/><rect x="47" y="723" width="259" height="20"/><rect x="47" y="763" width="259" height="20"/><rect x="47" y="803" width="259" height="20"/><rect x="47" y="843" width="259" height="20"/><rect x="47" y="883" width="259" height="20"/></g>
<path stroke="#dcdcdc" d="M47 303.500H306M47 323.500H306M47 343.500H306M47 363.500H306M47 383.500H306M47 403.500H306M47 423.500H306M47 443.500H306M47 463.500H306M47 483.500H306M47 503.500H306M47 523.500H306M47 543.500H306M47 563.500H306M47 583.500H306M47 603.500H306M47 623.500H306M47 643.500H306M47 663.500H306M47 683.500H306M47 703.500H306M47 723.500H306M47 743.500H306M47 763.500H306M47 783.500H306M47 803.500H306M47 823.500H306M47 843.500H306M47 863.500H306M47 883.500H306M47 903.500H306"/>
<path d="M247.500 284V923" stroke="#d4d4d4"/>
<rect x="118" y="303" width="187" height="19.500" fill="#3d97f0" stroke="#c89040" stroke-dasharray="1.500 1.500"/><path d="M247.500 304V322" stroke="#fff" opacity=".6"/>
<path d="M76.500 300V923" stroke="#888" stroke-dasharray="1 2"/>
<path d="M57.500 294V303" stroke="#888" stroke-dasharray="1 2"/>
<rect x="53.500" y="289.500" width="7" height="7" fill="#fff" stroke="#888"/><path d="M55 293H59" stroke="#333"/>
<path d="M62 293H66" stroke="#888" stroke-dasharray="1 2"/>
<path d="M67 298V288H73L75 290H82V292H72L67 298H80L83 292" fill="#f0c850" stroke="#805f10" stroke-width=".8"/>
<text x="86" y="297">模型历史记录</text>
<path stroke="#888" stroke-dasharray="1 2" d="M78 313H86M78 333H86M78 353H86M78 373H86M78 393H86M78 413H86M78 433H86M78 453H86M78 473H86M78 493H86M78 513H86M78 533H86M78 553H86M78 573H86M78 593H86M78 613H86M78 633H86M78 653H86M78 673H86M78 693H86M78 713H86M78 733H86M78 753H86M78 773H86M78 793H86M78 813H86M78 833H86M78 853H86M78 873H86M78 893H86M78 913H86"/>

<use href="#chk" x="94" y="313"/><use href="#body" x="110" y="313"/><text x="121" y="317" style="fill:#fff">体</text><text x="141" y="317" class="n" style="fill:#fff">(0)</text>
<use href="#chk" x="94" y="333"/><use href="#body" x="110" y="333"/><text x="121" y="337">体</text><text x="141" y="337" class="n">(1)</text>
<use href="#chk" x="94" y="353"/><use href="#blk" x="110" y="353"/><text x="121" y="357">块</text><text x="141" y="357" class="n">(2)</text>
<use href="#chk" x="94" y="373"/><use href="#blk" x="110" y="373"/><text x="121" y="377">块</text><text x="141" y="377" class="n">(3)</text>
<use href="#chk" x="94" y="393"/><use href="#blk" x="110" y="393"/><text x="121" y="397">块</text><text x="141" y="397" class="n">(4)</text>
<use href="#chk" x="94" y="413"/><use href="#sub" x="110" y="413"/><text x="121" y="417">求差</text><text x="153" y="417" class="n">(5)</text>
<use href="#chk" x="94" y="433"/><use href="#sub" x="110" y="433"/><text x="121" y="437">求差</text><text x="153" y="437" class="n">(6)</text>
<use href="#chk" x="94" y="453"/><use href="#cyl" x="110" y="453"/><text x="121" y="457">圆柱</text><text x="153" y="457" class="n">(7)</text>
<use href="#chk" x="94" y="473"/><use href="#cyl" x="110" y="473"/><text x="121" y="477">圆柱</text><text x="153" y="477" class="n">(8)</text>
<use href="#chk" x="94" y="493"/><use href="#add" x="110" y="493"/><text x="121" y="497">求和</text><text x="153" y="497" class="n">(9)</text>
<use href="#chk" x="94" y="513"/><use href="#cyl" x="110" y="513"/><text x="121" y="517">圆柱</text><text x="153" y="517" class="n">(10)</text>
<use href="#chk" x="94" y="533"/><use href="#cyl" x="110" y="533"/><text x="121" y="537">圆柱</text><text x="153" y="537" class="n">(11)</text>
<use href="#chk" x="94" y="553"/><use href="#cyl" x="110" y="553"/><text x="121" y="557">圆柱</text><text x="153" y="557" class="n">(12)</text>
<use href="#chk" x="94" y="573"/><use href="#add" x="110" y="573"/><text x="121" y="577">求和</text><text x="153" y="577" class="n">(13)</text>
<use href="#chk" x="94" y="593"/><use href="#sub" x="110" y="593"/><text x="121" y="597">求差</text><text x="153" y="597" class="n">(14)</text>
<use href="#chk" x="94" y="613"/><use href="#bld" x="110" y="613"/><text x="121" y="617">边倒圆</text><text x="165" y="617" class="n">(15)</text>
<use href="#chk" x="94" y="633"/><use href="#body" x="110" y="633"/><text x="121" y="637">体</text><text x="141" y="637" class="n">(16)</text>
<use href="#chk" x="94" y="653"/><use href="#body" x="110" y="653"/><text x="121" y="657">体</text><text x="141" y="657" class="n">(17)</text>
<use href="#chk" x="94" y="673"/><use href="#body" x="110" y="673"/><text x="121" y="677">体</text><text x="141" y="677" class="n">(18)</text>
<use href="#chk" x="94" y="693"/><use href="#body" x="110" y="693"/><text x="121" y="697">体</text><text x="141" y="697" class="n">(19)</text>
<use href="#chk" x="94" y="713"/><use href="#body" x="110" y="713"/><text x="121" y="717">体</text><text x="141" y="717" class="n">(20)</text>
<use href="#chk" x="94" y="733"/><use href="#body" x="110" y="733"/><text x="121" y="737">体</text><text x="141" y="737" class="n">(21)</text>
<use href="#chk" x="94" y="753"/><use href="#cyl" x="110" y="753"/><text x="121" y="757">圆柱</text><text x="153" y="757" class="n">(22)</text>
<use href="#chk" x="94" y="773"/><use href="#cyl" x="110" y="773"/><text x="121" y="777">圆柱</text><text x="153" y="777" class="n">(23)</text>
<use href="#chk" x="94" y="793"/><use href="#cone" x="110" y="793"/><text x="121" y="797">圆锥</text><text x="153" y="797" class="n">(24)</text>
<use href="#chk" x="94" y="813"/><use href="#add" x="110" y="813"/><text x="121" y="817">求和</text><text x="153" y="817" class="n">(25)</text>
<use href="#chk" x="94" y="833"/><use href="#add" x="110" y="833"/><text x="121" y="837">求和</text><text x="153" y="837" class="n">(26)</text>
<use href="#chk" x="94" y="853"/><use href="#body" x="110" y="853"/><text x="121" y="857">体</text><text x="141" y="857" class="n">(27)</text>
<use href="#chk" x="94" y="873"/><use href="#body" x="110" y="873"/><text x="121" y="877">体</text><text x="141" y="877" class="n">(28)</text>
<use href="#chk" x="94" y="893"/><use href="#body" x="110" y="893"/><text x="121" y="897">体</text><text x="141" y="897" class="n">(29)</text>
<use href="#chk" x="94" y="913"/><use href="#cyl" x="110" y="913"/><text x="121" y="917">圆柱</text><text x="153" y="917" class="n">(30)</text>

<!-- scrollbars -->
<rect x="306" y="284" width="17" height="639" fill="#efefef"/>
<path d="M311 294L314 290L317 294Z M311 909L314 913L317 909Z" fill="#333"/>
<rect x="307" y="307" width="13" height="28" rx="2" fill="#e4e4e4" stroke="#aaa"/><path d="M310 317H317M310 320H317M310 323H317" stroke="#666"/>
<rect x="47" y="923" width="276" height="15" fill="#efefef"/>
<path d="M58 925V931L54 928Z M295 925V931L299 928Z" fill="#333"/>
<rect x="66.500" y="922.500" width="187" height="13" rx="2" fill="#d2d2d2" stroke="#999"/><path d="M157 925V932M160 925V932M163 925V932" stroke="#555"/>
<path d="M46 944.500H155M215 944.500H323" stroke="#cfcfcf"/><rect x="160.500" y="942.500" width="49" height="5" rx="1" fill="#d2d2d2" stroke="#aaa"/>

<!-- VIEWPORT -->
<rect x="335" y="234" width="1150" height="723" fill="#000"/>
<polygon points="562,759 594,744 843,880 1227,771 1257,786 874,902" fill="#fff" stroke="#000"/>
<polygon points="640,650 796,720 796,866 640,793" fill="#d6d6d6" stroke="#000"/>
<polygon points="644,791 796,858 796,866 640,794" fill="#fff" stroke="#000"/>
<polygon points="643,722 675,712 796,745 796,787" fill="#fff" stroke="#000"/>
<!-- springs -->
<ellipse cx="706" cy="724" rx="10" ry="3" fill="#e8d020" stroke="#000" stroke-width=".7"/>
<g fill="#3c3ce2" stroke="#0a0a30" stroke-width="1.800">
<ellipse cx="706" cy="690" rx="30" ry="7"/><ellipse cx="706" cy="699" rx="30" ry="8"/><ellipse cx="706" cy="708" rx="30" ry="8"/><ellipse cx="706" cy="716" rx="30" ry="8"/>
</g>
<path d="M718 725L735 718V725L725 729H720Z" fill="#3c3ce2" stroke="#000"/>
<ellipse cx="670" cy="722" rx="8" ry="3" fill="#3c3ce2" stroke="#22228a" stroke-width=".7"/>
<g fill="#3c3ce2" stroke="#0a0a30" stroke-width="1.800"><ellipse cx="793" cy="737" rx="16" ry="5"/><ellipse cx="793" cy="747" rx="16" ry="5"/><ellipse cx="793" cy="757" rx="16" ry="5"/><ellipse cx="793" cy="765" rx="16" ry="3.500"/></g>
<ellipse cx="792" cy="780" rx="5" ry="3" fill="#3c3ce2" stroke="#000"/><path d="M782 784L792 781L796 784L796 788L790 787Z" fill="#ddd" stroke="#000" stroke-width=".8"/>
<polygon points="643,722 795,787 795,816 643,750" fill="#a6aeb8" stroke="#000"/>
<polygon points="643,750 795,816 795,855 643,787" fill="#c4a6b4" stroke="#000"/>
<polygon points="594,645 640,666 640,792 594,772" fill="#c8c8c4" stroke="#000"/>
<polygon points="796,737 843,758 843,887 796,866" fill="#c8c8c4" stroke="#000"/>
<polygon points="843,758 1227,642 1227,771 843,887" fill="#d6d6d6" stroke="#000"/>
<polygon points="843,647 1227,530 1227,642 843,758" fill="#d6716b" stroke="#000"/>
<polygon points="594,533 843,647 843,758 594,645" fill="#ba655f" stroke="#000"/>
<polygon points="843,536 1227,443 1227,530 843,647" fill="#7aa8d8" stroke="#000"/>
<polygon points="594,422 843,536 843,647 594,533" fill="#6a98c6" stroke="#000"/>
<path d="M594 533L843 647L1227 530" fill="none" stroke="#000" stroke-width="2.500"/>
<polygon points="562,759 874,902 874,947 562,803" fill="#cdcdc9" stroke="#000"/>
<polygon points="874,902 1257,786 1257,830 874,947" fill="#d8d8d8" stroke="#000"/>
<path d="M863 896L872 892L880 895L876 897L871 895L868 897L875 900L871 901Z" fill="#ddd" stroke="#000" stroke-width=".7"/>
<ellipse cx="717.500" cy="534" rx="7" ry="12" fill="url(#hole)" stroke="#000" stroke-width="1.200"/>
<ellipse cx="717.500" cy="646.500" rx="7.500" ry="12" fill="url(#hole2)" stroke="#000" stroke-width="1.200"/>
<ellipse cx="1004.500" cy="681" rx="9.500" ry="12" fill="#8e8e8e" stroke="#000" stroke-width="1.200"/>
<ellipse cx="1066" cy="662" rx="9.500" ry="12" fill="#8e8e8e" stroke="#000" stroke-width="1.200"/>
<ellipse cx="1066" cy="492" rx="9" ry="8" fill="#8e8e8e" stroke="#000"/>
<!-- top plate -->
<polygon points="562,362 874,504 874,550 562,407" fill="#c9c9c5" stroke="#000"/>
<polygon points="874,504 1257,388 1257,434 874,550" fill="#d2d2d2" stroke="#000"/>
<polygon points="946,243 1257,388 874,504 562,362" fill="#fff" stroke="#000"/>
<path d="M562 362L874 504L1257 388" fill="none" stroke="#000" stroke-width="1.500"/>
<use href="#screw" x="910" y="297"/><use href="#screw" x="710" y="358"/><use href="#screw" x="1110" y="390"/><use href="#screw" x="910" y="451"/>
<!-- ring -->
<ellipse cx="910" cy="370" rx="99" ry="40" fill="#0e8a6e" stroke="#000"/>
<rect x="811" y="358" width="198" height="12" fill="#0e8a6e"/>
<path d="M811 358V370M1009 358V370" stroke="#000"/>
<path d="M811 366A99 40 0 0 0 1009 366" fill="none" stroke="#045" stroke-width="1"/>
<ellipse cx="910" cy="358" rx="99" ry="40" fill="#0fa585" stroke="#063"/>
<ellipse cx="910" cy="355.500" rx="75" ry="28" fill="none" stroke="#07614e" stroke-width="1"/>
<ellipse cx="910" cy="355.500" rx="71" ry="26" fill="#0d8066" stroke="#000" stroke-width="1.300"/>
<ellipse cx="910" cy="384" rx="71" ry="26" fill="#fff" stroke="#000" stroke-width="1.300" clip-path="url(#innerClip)"/>
<use href="#mini" x="856" y="331"/><use href="#mini" x="963" y="380"/>
<!-- wcs -->
<path d="M910 480Q908 503 910 525Q912 503 910 480Z" fill="#7a88d8" stroke="#7a88d8" stroke-width="2"/>
<path d="M915 524Q930 521 950 511Q930 515 915 524Z" fill="#bfe8b0" stroke="#9ad088"/>
<path d="M915 532Q930 545 938 548Q930 538 915 532Z" fill="#f0a0a0" stroke="#e08090"/>
<text x="914" y="478" style="font-size:12px;fill:#4a62f0">ZC</text>
<text x="940" y="514" style="font-size:12px;fill:#2a9a3a">YC</text>
<text x="930" y="560" style="font-size:12px;fill:#d03040">XC</text>
<g fill="none" stroke="#f2a04c" stroke-width="4.500"><ellipse cx="965" cy="485" rx="33" ry="11"/><ellipse cx="965" cy="514" rx="34" ry="13"/><path d="M932 490L919 497V513L931 516M998 490L1010 497V514L1000 516M960 498V531M968 475V496M932 490V514M998 490V512"/></g>

<!-- triad -->
<path d="M394 867L410 863L429 871V888L412 897L394 888Z" fill="#9c9c9c"/><path d="M394 867L411 875L429 871M411 875V897" stroke="#b8b8b8" fill="none"/>
<path d="M394 893L431 877" stroke="#3a9a3a"/>
<path d="M393 893V866" stroke="#1438d8" stroke-width="3.500"/><path d="M393 862L389 870H397Z" fill="#1438d8"/>
<path d="M394 895L414 907" stroke="#c82020" stroke-width="3"/><circle cx="393" cy="895" r="3.500" fill="#ddd"/>
<text x="389" y="860" style="font-size:13px;fill:#1c48e8">Z</text><text x="417" y="914" style="font-size:13px;fill:#d02828">X</text>

<!-- QQ -->
<rect x="1110" y="929" width="126" height="22" fill="#fff" stroke="#2f8cff" stroke-width="2"/>
<rect x="1072" y="914" width="37" height="37" fill="#dfe8f4" stroke="#2f8cff" stroke-width="2"/>
<path d="M1080 945Q1080 935 1084 933Q1082 921 1090 920Q1098 921 1096 933Q1100 935 1100 945Z" fill="#d0d6e4" stroke="#bcc2d2"/>
<text x="1115" y="945" class="b" style="font-size:12px;fill:#2f7ef5">中</text>
<path d="M1143 933Q1149 941 1137 946Q1146 948 1148 941Q1148 936 1143 933Z" fill="#2f7ef5"/>
<circle cx="1159" cy="941" r="1.600" fill="none" stroke="#2f7ef5"/><path d="M1166 938V942L1164 944" stroke="#2f7ef5" stroke-width="1.500" fill="none"/>
<path d="M1176 946L1183 939A4 4 0 0 1 1188 934L1185.500 937L1187 939L1189 936.500A4 4 0 0 1 1184 941L1178 948Z" fill="#2f7ef5"/>
<path d="M1200 938H1209V948H1200Z" fill="#2f7ef5"/><rect x="1202" y="933" width="5" height="3" fill="#2f7ef5"/><path d="M1202 941H1207M1202 944H1207" stroke="#fff"/>
<circle cx="1226" cy="940" r="7.500" fill="#fff" stroke="#2f7ef5" stroke-width="1.500"/><circle cx="1223" cy="938" r="1" fill="#2f7ef5"/><circle cx="1229" cy="938" r="1" fill="#2f7ef5"/><path d="M1222 942Q1226 946 1230 942" fill="none" stroke="#2f7ef5"/>

<!-- bottom toolbars -->
<rect x="4" y="957" width="1481" height="69" fill="#dadada"/>
<path d="M4 957.500H1485" stroke="#f4f4f4"/>
<path d="M5 990.500H187M187.500 958V990M139.500 960V988M155 1025.500V991M155 990.500H1485" stroke="#efefef"/>
<path class="grip" d="M8 961V986M159 995V1022"/>
<rect x="16" y="964" width="21" height="20" fill="#8e8e86"/><path d="M21 980L27 972L32 980Z" fill="none" stroke="#9a8a6a"/>
<g transform="translate(57,974)"><use href="#ybox" x="-4" y="-5"/><use href="#ybox" x="-3" y="6"/><use href="#ybox" x="4" y="6"/><path d="M5 -6H13M9 -10V-2" stroke="#1468e0" stroke-width="2"/></g>
<g transform="translate(89,974)"><path d="M-8 -3L2 -8L8 -5V4L-2 8L-8 5Z" fill="#f8d050" stroke="#a07010"/><path d="M3 -11Q10 -10 12 -5M-12 5Q-10 10 -3 11M2 -9Q7 -8 9 -5M-10 4Q-8 8 -3 9" fill="none" stroke="#3a78d8"/></g>
<g transform="translate(120,974)"><path d="M-8 -10L0 -5L-8 0ZM8 -10L0 -5L8 0Z" fill="#1414c8"/><rect x="-10" y="2" width="9" height="9" fill="#f0d850" stroke="#222"/><path d="M2 11V2L11 11Z" fill="#c81414"/></g>
<g transform="translate(156,974)"><use href="#ybox" x="-1" y="-6"/><use href="#ybox" x="-4" y="6"/><use href="#ybox" x="6" y="6"/></g><use href="#dd" x="178" y="982"/>

<g transform="translate(177,1008)"><path d="M-10 -9L8 -5V10L-10 6Z" fill="#f4f4f4" stroke="#111"/><path d="M-7 -5H-1V1H-7ZM-7 1V5H-1V1M0 3H5V8" fill="none" stroke="#111"/><path d="M6 -11L9 -6L14 -7L10 -3L11 2L6 -1L2 1L4 -4Z" fill="#f0e040"/></g>
<rect x="196" y="996" width="24" height="24" fill="#7a8a8a"/><circle cx="208" cy="1008" r="7" fill="#8a7a7a"/>
<text x="223" y="1012" class="g">完成草图</text>
<path d="M282 1000V1012Q282 1016 287 1016Q291 1016 291 1009Q291 1004 295 1004Q300 1006 300 1012" fill="none" stroke="#222" stroke-width="1.300"/><g fill="#e01818"><circle cx="282" cy="1009" r="2"/><circle cx="291" cy="1009" r="2"/><circle cx="300" cy="1009" r="2"/></g>
<path d="M314 1016L330 1000" stroke="#222" stroke-width="1.300"/><circle cx="314" cy="1016" r="2" fill="#e01818"/><circle cx="330" cy="1000" r="2" fill="#e01818"/>
<path d="M344 1000Q358 1002 362 1015" fill="none" stroke="#222" stroke-width="1.300"/><circle cx="344" cy="1000" r="2" fill="#e01818"/><circle cx="357" cy="1004" r="2" fill="#e01818"/><circle cx="362" cy="1015" r="2" fill="#e01818"/>
<circle cx="384" cy="1008" r="10" fill="none" stroke="#222" stroke-width="1.300"/>
<path d="M405 998H416Q425 998 425 1008V1017" fill="none" stroke="#a08c8c"/><path d="M435 998H447L456 1008V1018" fill="none" stroke="#a08c8c"/>
<rect x="467.500" y="1001.500" width="19" height="14" fill="none" stroke="#111" stroke-width="1.300"/><circle cx="467.500" cy="1001.500" r="2" fill="#e01818"/><circle cx="486.500" cy="1015.500" r="2" fill="#e01818"/>
<path d="M498 1012L507 1002L513 1013L520 1008" fill="none" stroke="#223" stroke-width="1.300"/><g fill="#e01818"><circle cx="507" cy="1002" r="2"/><circle cx="513" cy="1013" r="2"/></g>
<path d="M530 1008H549M539.500 998V1018" stroke="#222" stroke-width="1.300"/>
<path d="M560 1004L570 998L580 1002V1012L570 1018H562Z" fill="#d8d8d8" stroke="#888" stroke-width="1.300"/><use href="#dd" x="592" y="1008"/>
<g stroke="#999" fill="none"><path d="M608 1017L628 1000M620 1016L612 1006"/><path d="M640 1017L660 1000M652 1016L644 1000"/><path d="M676 1012L697 1005M682 1004L686 1016M690 1002L693 1014" stroke="#666"/><path d="M724 1016L745 1000M730 1018L750 1002M724 1003H734" stroke="#aaa"/><path d="M758 1016V1006H768L777 1000" stroke="#888"/><path d="M805 1000L817 1018M818 1000L803 1016" stroke="#888"/><circle cx="810" cy="1010" r="7" stroke="#777"/><path d="M832 1013L852 1000M838 1017L858 1002M846 998V1018" stroke="#999"/></g>
<use href="#dd" x="710" y="1008"/><use href="#dd" x="789" y="1008"/><use href="#dd" x="864" y="1008"/><use href="#dd" x="875" y="1016"/>
<rect x="0" y="1026" width="1489" height="7" fill="#1c1c1c"/>
<rect x="0" y="0" width="4" height="1033" fill="#161616"/><rect x="1485" y="0" width="4" height="1033" fill="#161616"/>
</svg>
</body></html>
